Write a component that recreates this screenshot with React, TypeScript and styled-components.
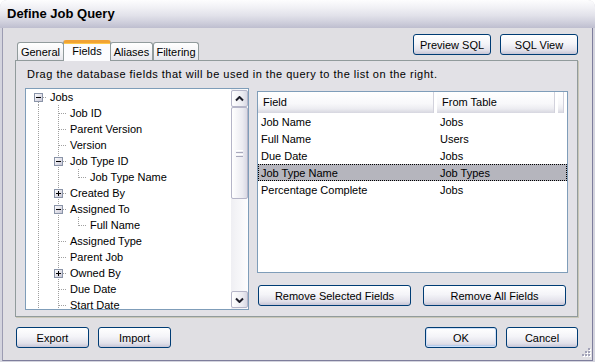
import React from 'react';
import styled, { createGlobalStyle, css } from 'styled-components';

const FONT = `'Liberation Sans', Arial, sans-serif`;

const GlobalStyle = createGlobalStyle`
  html, body {
    margin: 0;
    padding: 0;
    background: #ffffff;
    overflow: hidden;
  }
  body {
    font-family: ${FONT};
    font-size: 11px;
    color: #000;
  }
  * {
    box-sizing: border-box;
  }
`;

const Window = styled.div`
  width: 595px;
  height: 362px;
  display: flex;
  flex-direction: column;
  background: #d4d4de;
  border-radius: 7px 7px 0 0;
  overflow: hidden;
`;

const TitleBar = styled.div`
  height: 28px;
  flex: none;
  display: flex;
  align-items: center;
  padding: 0 0 1px 7px;
  background: linear-gradient(#fdfdfe 0%, #f2f2f6 25%, #e2e2ea 55%, #cfcfdc 80%, #bebecf 100%);
  font: bold 13px ${FONT};
`;

const Body = styled.div`
  flex: 1;
  position: relative;
  margin: 0 2px 1px 2px;
  border-left: 1px solid #9c9cb2;
  border-right: 1px solid #7e7e9c;
  border-bottom: 1px solid #7e7e9c;
  background: #e0dfe3;
  padding: 0 14px 0 12px;
  display: flex;
  flex-direction: column;
`;

const TopRow = styled.div`
  height: 32px;
  flex: none;
  display: flex;
  justify-content: space-between;
`;

const Tabs = styled.div`
  display: flex;
  align-items: flex-end;
  padding-left: 2px;
`;

const Tab = styled.div<{ $active?: boolean; $w: number }>`
  width: ${(p) => p.$w}px;
  height: 18px;
  display: flex;
  align-items: center;
  justify-content: center;
  padding-top: 1px;
  border: 1px solid #919b9c;
  border-bottom: none;
  border-radius: 3px 3px 0 0;
  background: linear-gradient(#ffffff, #f3f3f5 60%, #e6e6ec);
  ${(p) =>
    p.$active &&
    css`
      height: 21px;
      margin: 0 -1px -1px;
      width: ${p.$w + 2}px;
      position: relative;
      z-index: 1;
      padding-top: 0;
      padding-bottom: 3px;
      border-top: 3px solid #f1a334;
      box-shadow: inset 0 1px 0 #ffc84a;
      background: #fcfcfe;
    `}
`;

const ButtonGroup = styled.div`
  display: flex;
  gap: 9px;
`;

const TopButtons = styled(ButtonGroup)`
  margin-top: 6px;
`;

const Button = styled.button<{ $w: number; $default?: boolean }>`
  width: ${(p) => p.$w}px;
  height: 21px;
  padding: 0;
  font: 11px ${FONT};
  color: #000;
  border: 1px solid #003c74;
  border-radius: 3px;
  background: linear-gradient(#ffffff 0%, #f4f4f8 45%, #e2e1ea 80%, #c6c5d6 100%);
  ${(p) =>
    p.$default &&
    css`
      box-shadow: inset 0 0 0 1px #cfe0f8, inset 0 -1px 0 1px #b8cdeb;
    `}
`;

const Panel = styled.div`
  height: 257px;
  flex: none;
  border: 1px solid #919b9c;
  box-shadow: 1px 1px 0 #c9c7b8;
  background: #e2e1e6;
  padding: 0 0 6px 9px;
  display: flex;
  flex-direction: column;
`;

const Hint = styled.div`
  height: 27px;
  padding: 7px 0 0 2px;
  line-height: 13px;
  letter-spacing: 0.5px;
  white-space: nowrap;
`;

const ContentRow = styled.div`
  display: flex;
  gap: 8px;
  align-items: flex-start;
`;

const TreeBox = styled.div`
  width: 224px;
  height: 222px;
  display: flex;
  border: 1px solid #7f9db9;
  background: #fff;
`;

const TreeList = styled.div`
  flex: 1;
  overflow: hidden;
  padding-left: 2px;
`;

const TreeRowBox = styled.div`
  height: 16px;
  display: flex;
  align-items: center;
  white-space: nowrap;
`;

const TreeLabel = styled.span`
  margin-left: 2px;
  line-height: 16px;
`;

const ScrollBar = styled.div`
  width: 17px;
  display: flex;
  flex-direction: column;
  padding: 1px 0;
  background: linear-gradient(to right, #efeff3, #fdfdfe);
`;

const ScrollButton = styled.div`
  height: 17px;
  flex: none;
  display: flex;
  align-items: center;
  justify-content: center;
  border: 1px solid #b5b5c8;
  border-radius: 2px;
  background: linear-gradient(to right, #ffffff, #ebebf1 70%, #d9d9e4);
`;

const Thumb = styled(ScrollButton)`
  height: 92px;
`;

const Track = styled.div`
  flex: 1;
`;

const ListColumn = styled.div`
  width: 311px;
  margin-top: 3px;
  display: flex;
  flex-direction: column;
`;

const ListView = styled.div`
  height: 182px;
  border: 1px solid #7f9db9;
  background: #fff;
  overflow: hidden;
`;

const HeaderRow = styled.div`
  height: 21px;
  display: flex;
`;

const HeaderCell = styled.div<{ $w?: number }>`
  ${(p) => (p.$w ? `width: ${p.$w}px;` : 'flex: 1;')}
  display: flex;
  align-items: center;
  padding: 0 0 2px 5px;
  background: linear-gradient(#ffffff 0%, #f8f8fa 55%, #ececf1 80%, #d6d6df 100%);
  box-shadow: inset -2px 0 #ffffff, inset -3px 0 #d2d2dc;
  border-right: 1px solid #fff;
`;

const DataRow = styled.div<{ $selected?: boolean }>`
  height: 17px;
  display: flex;
  align-items: center;
  ${(p) =>
    p.$selected &&
    css`
      background: #b5b5bd;
      outline: 1px dotted #000;
      outline-offset: -1px;
    `}
`;

const DataCell = styled.div<{ $w: number }>`
  width: ${(p) => p.$w}px;
  padding-left: 3px;
  white-space: nowrap;
`;

const ListButtons = styled.div`
  display: flex;
  justify-content: space-between;
  margin-top: 12px;
  padding: 0 2px 0 1px;
`;

const BottomRow = styled.div`
  margin-top: 10px;
  display: flex;
  justify-content: space-between;
  padding-left: 1px;
`;

const Grip = styled.svg`
  position: absolute;
  right: 1px;
  bottom: 1px;
`;

type GuideKind = 'pipe' | 'tee' | 'ell' | 'root';

const DOT = { stroke: '#a0a0a0', strokeDasharray: '1 1', shapeRendering: 'crispEdges' as const };

const GuideCell = ({ kind, expander }: { kind: GuideKind; expander?: 'plus' | 'minus' }) => {
  const hasArm = kind !== 'pipe';
  return (
    <svg width="20" height="16" style={{ flex: 'none', display: 'block' }}>
      {(kind === 'pipe' || kind === 'tee') && <line x1="10.5" y1="0" x2="10.5" y2="16" {...DOT} />}
      {kind === 'ell' && <line x1="10.5" y1="0" x2="10.5" y2="9" {...DOT} />}
      {kind === 'root' && <line x1="10.5" y1="9" x2="10.5" y2="16" {...DOT} />}
      {hasArm && <line x1="11" y1="8.5" x2="18" y2="8.5" {...DOT} />}
      {expander && (
        <g shapeRendering="crispEdges">
          <defs>
            <linearGradient id="expg" x1="0" y1="0" x2="1" y2="1">
              <stop offset="0" stopColor="#ffffff" />
              <stop offset="1" stopColor="#c6c5d5" />
            </linearGradient>
          </defs>
          <rect x="6.5" y="4.5" width="8" height="8" fill="url(#expg)" stroke="#8a94a8" />
          <line x1="8" y1="8.5" x2="13" y2="8.5" stroke="#000" />
          {expander === 'plus' && <line x1="10.5" y1="6" x2="10.5" y2="11" stroke="#000" />}
        </g>
      )}
    </svg>
  );
};

type TreeItem = { label: string; guides: GuideKind[]; expander?: 'plus' | 'minus' };

const treeItems: TreeItem[] = [
  { label: 'Jobs', guides: ['root'], expander: 'minus' },
  { label: 'Job ID', guides: ['pipe', 'tee'] },
  { label: 'Parent Version', guides: ['pipe', 'tee'] },
  { label: 'Version', guides: ['pipe', 'tee'] },
  { label: 'Job Type ID', guides: ['pipe', 'tee'], expander: 'minus' },
  { label: 'Job Type Name', guides: ['pipe', 'pipe', 'ell'] },
  { label: 'Created By', guides: ['pipe', 'tee'], expander: 'plus' },
  { label: 'Assigned To', guides: ['pipe', 'tee'], expander: 'minus' },
  { label: 'Full Name', guides: ['pipe', 'pipe', 'ell'] },
  { label: 'Assigned Type', guides: ['pipe', 'tee'] },
  { label: 'Parent Job', guides: ['pipe', 'tee'] },
  { label: 'Owned By', guides: ['pipe', 'tee'], expander: 'plus' },
  { label: 'Due Date', guides: ['pipe', 'tee'] },
  { label: 'Start Date', guides: ['pipe', 'tee'] },
];

const fields = [
  { field: 'Job Name', table: 'Jobs' },
  { field: 'Full Name', table: 'Users' },
  { field: 'Due Date', table: 'Jobs' },
  { field: 'Job Type Name', table: 'Job Types', selected: true },
  { field: 'Percentage Complete', table: 'Jobs' },
];

const Chevron = ({ down }: { down?: boolean }) => (
  <svg width="9" height="6" viewBox="0 0 9 6">
    <path
      d={down ? 'M1 1.5 L4.5 5 L8 1.5' : 'M1 4.5 L4.5 1 L8 4.5'}
      fill="none"
      stroke="#1e1e2a"
      strokeWidth="2"
    />
  </svg>
);

const GripLines = () => (
  <svg width="7" height="7">
    {[0.5, 2.5, 4.5, 6.5].map((y) => (
      <line key={y} x1="0" y1={y} x2="7" y2={y} stroke={y % 4 === 0.5 ? '#ffffff' : '#a9a9bc'} />
    ))}
  </svg>
);

export default function App() {
  return (
    <>
      <GlobalStyle />
      <Window>
        <TitleBar>Define Job Query</TitleBar>
        <Body>
          <TopRow>
            <Tabs>
              <Tab $w={47}>General</Tab>
              <Tab $w={46} $active>
                Fields
              </Tab>
              <Tab $w={43}>Aliases</Tab>
              <Tab $w={46}>Filtering</Tab>
            </Tabs>
            <TopButtons>
              <Button $w={78}>Preview SQL</Button>
              <Button $w={78}>SQL View</Button>
            </TopButtons>
          </TopRow>

          <Panel>
            <Hint>Drag the database fields that will be used in the query to the list on the right.</Hint>
            <ContentRow>
              <TreeBox>
                <TreeList>
                  {treeItems.map((item) => (
                    <TreeRowBox key={item.label}>
                      {item.guides.map((g, i) => (
                        <GuideCell
                          key={i}
                          kind={g}
                          expander={i === item.guides.length - 1 ? item.expander : undefined}
                        />
                      ))}
                      <TreeLabel>{item.label}</TreeLabel>
                    </TreeRowBox>
                  ))}
                </TreeList>
                <ScrollBar>
                  <ScrollButton>
                    <Chevron />
                  </ScrollButton>
                  <Thumb>
                    <GripLines />
                  </Thumb>
                  <Track />
                  <ScrollButton>
                    <Chevron down />
                  </ScrollButton>
                </ScrollBar>
              </TreeBox>

              <ListColumn>
                <ListView>
                  <HeaderRow>
                    <HeaderCell $w={179}>Field</HeaderCell>
                    <HeaderCell $w={121}>From Table</HeaderCell>
                    <HeaderCell />
                  </HeaderRow>
                  {fields.map((f) => (
                    <DataRow key={f.field} $selected={f.selected}>
                      <DataCell $w={179}>{f.field}</DataCell>
                      <DataCell $w={121}>{f.table}</DataCell>
                    </DataRow>
                  ))}
                </ListView>
                <ListButtons>
                  <Button $w={153}>Remove Selected Fields</Button>
                  <Button $w={143}>Remove All Fields</Button>
                </ListButtons>
              </ListColumn>
            </ContentRow>
          </Panel>

          <BottomRow>
            <ButtonGroup>
              <Button $w={73}>Export</Button>
              <Button $w={73}>Import</Button>
            </ButtonGroup>
            <ButtonGroup>
              <Button $w={72} $default>
                OK
              </Button>
              <Button $w={72}>Cancel</Button>
            </ButtonGroup>
          </BottomRow>

          <Grip width="12" height="12">
            {[
              [9, 1],
              [6, 4],
              [9, 4],
              [3, 7],
              [6, 7],
              [9, 7],
            ].map(([x, y]) => (
              <g key={`${x}-${y}`}>
                <rect x={x + 1} y={y + 1} width="2" height="2" fill="#ffffff" />
                <rect x={x} y={y} width="2" height="2" fill="#a3a3b8" />
              </g>
            ))}
          </Grip>
        </Body>
      </Window>
    </>
  );
}
